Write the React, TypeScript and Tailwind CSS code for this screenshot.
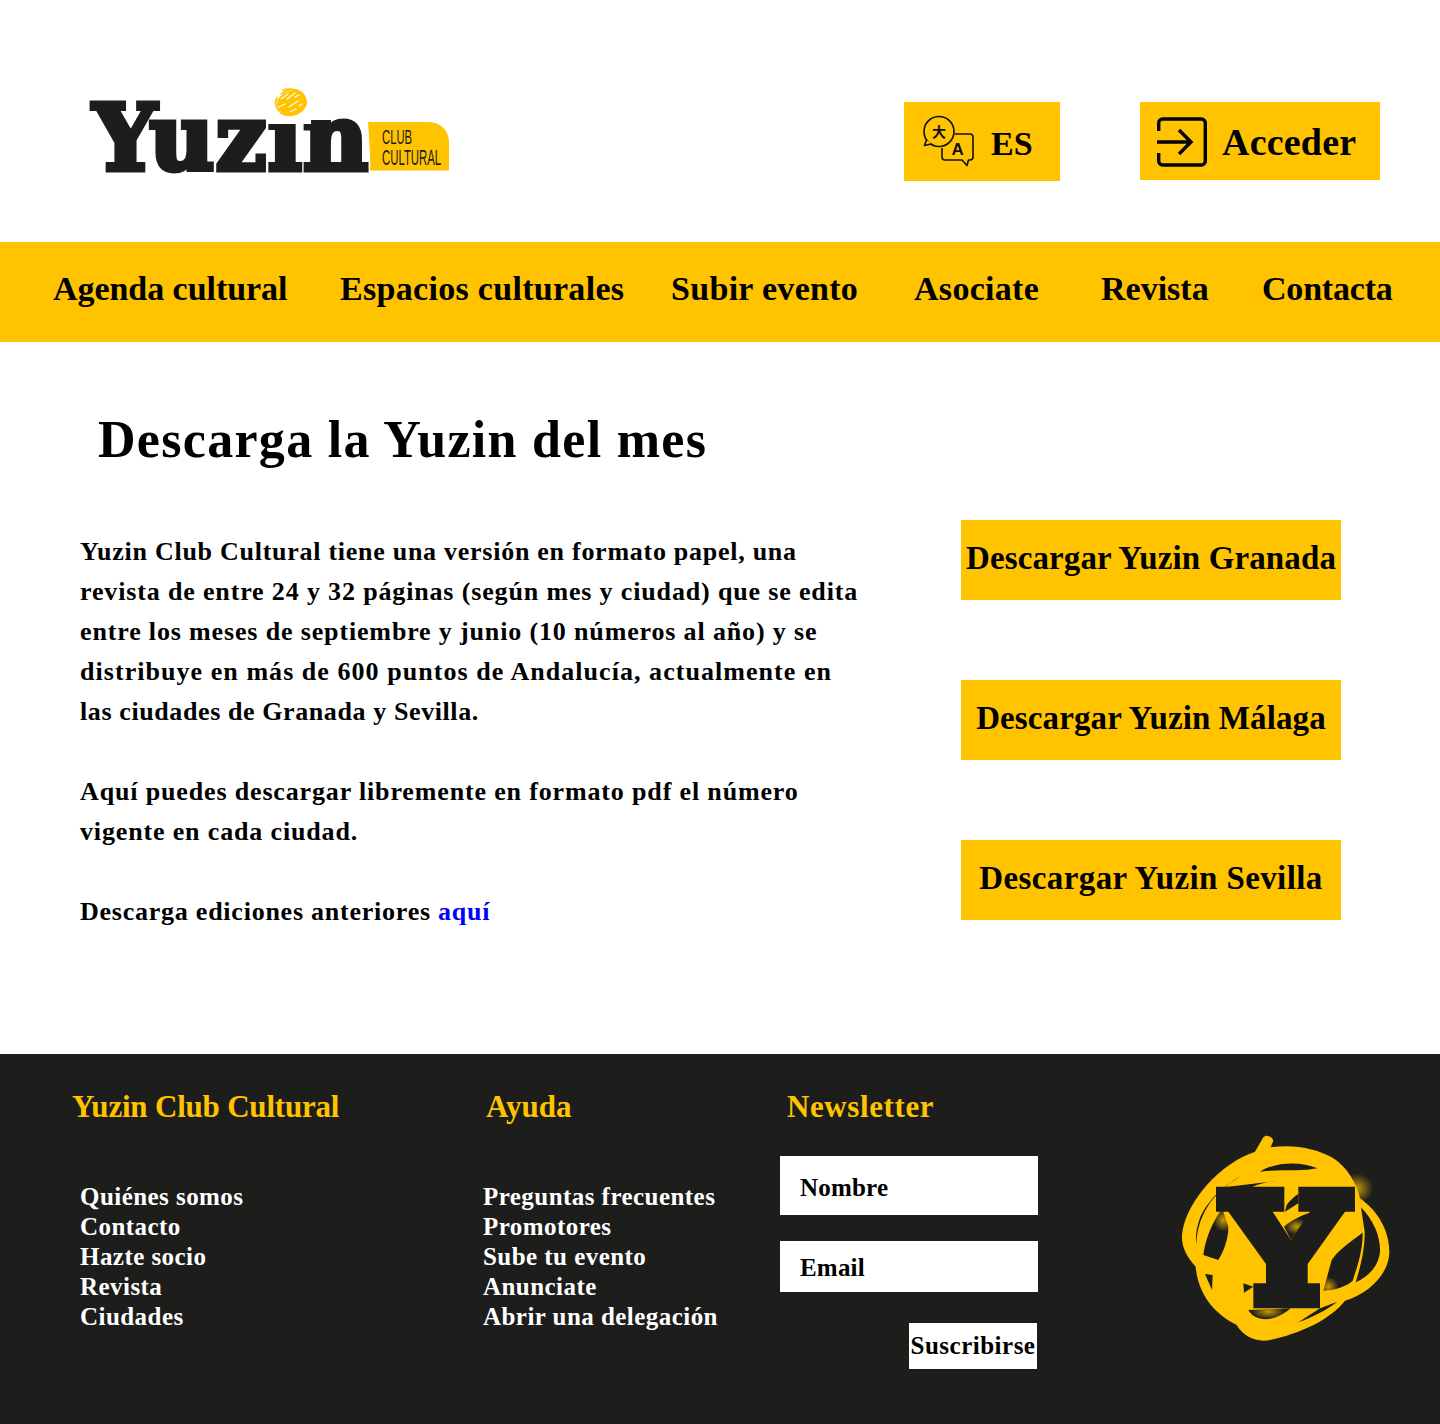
import React from "react";

const Logo = () => (
  <svg width="370" height="100" viewBox="0 0 370 100" className="block overflow-visible">
    <text transform="translate(2 84) scale(1.075 1)" fontFamily="'DejaVu Serif', serif" fontWeight="700" fontSize="92" fontStretch="condensed" letterSpacing="1.5" fill="#1d1d1b" stroke="#1d1d1b" strokeWidth="5">Yuzin</text>
    <rect x="176" y="0" width="44" height="38" fill="#fff" />
    <path d="M277 36h61a20 20 0 0 1 20 20v28.500h-79q1-6-2-48.500z" fill="#ffc300" />
    <text transform="translate(291 58) scale(.565 1)" fontFamily="'Liberation Sans', sans-serif" fontSize="20" fill="#1d1d1b">CLUB</text>
    <text transform="translate(291 79) scale(.517 1)" fontFamily="'Liberation Sans', sans-serif" fontSize="22" fill="#1d1d1b">CULTURAL</text>
    <ellipse cx="201" cy="17" rx="15" ry="12" fill="#ffc300" transform="rotate(-10 201 17)" />
    <g fill="none" stroke="#ffc300" strokeWidth="1.6" strokeLinecap="round">
      <path d="M190 8c6-5 15-6 20-2 6 5 6 13 0 19-5 5-14 6-20 2-5-4-7-10-4-15" />
      <path d="M192 4c7-2 14 0 19 4" />
    </g>
    <g fill="none" stroke="#fff" strokeWidth="1.1" strokeLinecap="round">
      <path d="M190 13l7-5M196 13l8-6M188 21l6-3M198 21l9-6M204 11l4-2M199 26l6-3M208 20l3-2" />
    </g>
  </svg>
);

const LangIcon = () => (
  <svg width="52" height="52" viewBox="0 0 52 52" fill="none" stroke="#111" strokeWidth="1.6" className="mt-px overflow-visible">
    <circle cx="16" cy="15.500" r="15" />
    <path d="M3.500 24L1.500 29.500L9 27.800" fill="#ffc300" strokeLinejoin="round" />
    <path d="M32 18h15a3 3 0 0 1 3 3v20a3 3 0 0 1-3 3h-1.500l-1.500 5.500-5-5.500H22a3 3 0 0 1-3-3v-9" strokeLinejoin="round" />
    <text x="9" y="21" fontSize="14" fill="#111" stroke="none" fontFamily="'Noto Sans CJK SC', sans-serif">大</text>
    <text x="28.500" y="38.500" fontSize="17" fill="#111" stroke="none" fontFamily="'Liberation Sans', sans-serif">A</text>
  </svg>
);

const LoginIcon = () => (
  <svg width="50" height="50" viewBox="0 0 50 50" fill="none" stroke="#000" strokeWidth="3.4" className="mt-px">
    <path d="M1.700 14V6a4 4 0 0 1 4-4h38.600a4 4 0 0 1 4 4v38a4 4 0 0 1-4 4H5.700a4 4 0 0 1-4-4v-8" />
    <path d="M0 25h34M22 13l12 12-12 12" />
  </svg>
);

const FooterLogo = () => (
  <svg width="250" height="240" viewBox="0 0 750 720" className="block">
    <defs>
      <radialGradient id="glow">
        <stop offset="0%" stopColor="#ffc300" stopOpacity="0.75" />
        <stop offset="100%" stopColor="#ffc300" stopOpacity="0" />
      </radialGradient>
    </defs>
    <ellipse cx="590" cy="205" rx="50" ry="45" fill="url(#glow)" />
    <path fill="#ffc300" d="M285 95L310 52C318 42 335 48 340 62L332 82C400 72 470 85 520 115C560 140 590 190 600 235C650 270 690 330 688 400C685 460 630 520 555 542C510 600 420 640 330 660C290 668 250 650 230 615C170 585 115 530 107 440C75 405 60 370 68 330C85 240 180 130 285 95Z" />
    <g fill="#1d1d1b">
      <path d="M300 155C340 128 420 122 472 145C430 155 350 148 300 155Z" />
      <path d="M245 168C190 195 135 250 118 300C110 325 105 350 110 375C108 320 135 260 170 225C190 200 225 180 245 168Z" />
      <path d="M352 183C290 185 220 220 180 275C150 320 135 365 130 405L175 420C190 395 205 360 205 320L190 275L205 200Z" />
      <path d="M603 262C640 300 662 350 660 395C655 440 625 470 587 487C600 445 615 390 614 335Z" />
      <path d="M608 338C570 365 530 395 515 420L490 512C530 510 560 498 578 482C595 430 608 390 608 338Z" />
      <path d="M265 570C285 605 340 610 392 565Z" />
      <path d="M415 607C460 590 500 570 532 545L480 565Z" />
      <path d="M135 462L158 465L156 510Z" />
      <path d="M250 490L280 500L252 518Z" />
      <path d="M372 320C395 300 425 285 450 278L393 360Z" />
      <path d="M380 255C390 240 405 228 415 222V250L375 275Z" />
    </g>
    <ellipse cx="190" cy="300" rx="30" ry="35" fill="url(#glow)" />
    <ellipse cx="505" cy="500" rx="30" ry="30" fill="url(#glow)" />
    <ellipse cx="325" cy="575" rx="50" ry="22" fill="url(#glow)" />
    <ellipse cx="410" cy="320" rx="35" ry="25" fill="url(#glow)" />
    <path fill="#1d1d1b" d="M168 200H373V275H338L393 360L450 275H415V200H585V275H555L443 432V490H480V565H280V490H318V432L205 275H168Z" />
  </svg>
);

const nav = [
  ["Agenda cultural", "w-[340px] pl-[53px] tracking-[-0.05px]"],
  ["Espacios culturales", "w-[331px]"],
  ["Subir evento", "w-[243px]"],
  ["Asociate", "w-[187px]"],
  ["Revista", "w-[161px] tracking-[0px]"],
  ["Contacta", "w-[178px] tracking-[-0.2px]"],
];

const DownloadBtn = ({ children, cls }: { children: React.ReactNode; cls: string }) => (
  <a className={`flex h-20 w-[380px] items-center justify-center bg-[#ffc300] pb-[3px] text-[33px] font-bold text-black ${cls}`}>{children}</a>
);

const FootList = ({ items }: { items: string[] }) => (
  <ul className="text-[25px] font-bold leading-[30px] tracking-[0.45px] text-white">
    {items.map((i) => <li key={i}>{i}</li>)}
  </ul>
);

const FootTitle = ({ children, cls }: { children: React.ReactNode; cls: string }) => (
  <h3 className={`text-[31px] font-bold leading-10 text-[#ffc300] ${cls}`}>{children}</h3>
);

export default function App() {
  return (
    <div className="flex h-[1424px] w-full flex-col bg-white font-['Liberation_Serif',serif]">
      <header className="flex h-[242px] shrink-0 items-start">
        <div className="ml-[91px] mt-[86px]"><Logo /></div>
        <a className="ml-[443px] mt-[102px] flex h-[79px] w-[156px] items-center gap-4 bg-[#ffc300] pl-[19px] text-[34px] font-bold text-black">
          <LangIcon /><span className="pt-[3px]">ES</span>
        </a>
        <a className="ml-20 mt-[102px] flex h-[78px] w-[240px] items-center gap-[15px] bg-[#ffc300] pl-[17px] text-[38px] font-bold tracking-[0.2px] text-black">
          <LoginIcon /><span className="pt-[3px]">Acceder</span>
        </a>
      </header>
      <nav className="flex h-[100px] shrink-0 items-center bg-[#ffc300] pb-[7px] text-[34px] font-bold tracking-[0.3px] text-black">
        {nav.map(([t, c]) => <a key={t} className={`whitespace-nowrap ${c}`}>{t}</a>)}
      </nav>
      <main className="h-[712px] shrink-0">
        <h1 className="ml-[98px] mt-[68px] text-[52px] font-bold leading-[60px] tracking-[1.3px] text-black">Descarga la Yuzin del mes</h1>
        <div className="mt-[50px] flex">
          <div className="ml-20 w-[800px] pt-3 text-[26px] font-bold leading-10 tracking-[0.85px] text-black">
            <p>
              <span className="tracking-[0.73px]">Yuzin Club Cultural tiene una versión en formato papel, una</span><br />
              revista de entre 24 y 32 páginas (según mes y ciudad) que se edita<br />
              entre los meses de septiembre y junio (10 números al año) y se<br />
              <span className="tracking-[1.05px]">distribuye en más de 600 puntos de Andalucía, actualmente en</span><br />
              <span className="tracking-[0.6px]">las ciudades de Granada y Sevilla.</span>
            </p>
            <p className="mt-10">Aquí puedes descargar libremente en formato pdf el número<br />vigente en cada ciudad.</p>
            <p className="mt-10 tracking-[0.76px]">Descarga ediciones anteriores <a className="text-[#0000ff]">aquí</a></p>
          </div>
          <div className="ml-[81px] flex flex-col gap-20">
            <DownloadBtn cls="tracking-[0.12px]">Descargar Yuzin Granada</DownloadBtn>
            <DownloadBtn cls="tracking-[0.12px]">Descargar Yuzin Málaga</DownloadBtn>
            <DownloadBtn cls="tracking-[0.4px]">Descargar Yuzin Sevilla</DownloadBtn>
          </div>
        </div>
      </main>
      <footer className="flex flex-1 bg-[#1d1d1b]">
        <div className="ml-[72px] w-[408px] pt-[33px]">
          <FootTitle cls="tracking-[-0.2px]">Yuzin Club Cultural</FootTitle>
          <div className="ml-2 mt-[55px]"><FootList items={["Quiénes somos", "Contacto", "Hazte socio", "Revista", "Ciudades"]} /></div>
        </div>
        <div className="w-[300px] pt-[33px]">
          <FootTitle cls="ml-[6px]">Ayuda</FootTitle>
          <div className="ml-[3px] mt-[55px]"><FootList items={["Preguntas frecuentes", "Promotores", "Sube tu evento", "Anunciate", "Abrir una delegación"]} /></div>
        </div>
        <div className="w-[258px] pt-[33px]">
          <FootTitle cls="ml-[7px] tracking-[0.6px]">Newsletter</FootTitle>
          <input placeholder="Nombre" className="mt-[29px] block h-[59px] w-[258px] bg-white pl-5 pt-[5px] text-[25px] font-bold tracking-[0.2px] placeholder:text-black" />
          <input placeholder="Email" className="mt-[26px] block h-[51px] w-[258px] bg-white pl-5 pt-[2px] text-[25px] font-bold tracking-[0.2px] placeholder:text-black" />
          <div className="mt-[31px] flex justify-end pr-px">
            <button className="h-[46px] w-[128px] bg-white text-[25px] font-bold tracking-[0.5px] text-black">Suscribirse</button>
          </div>
        </div>
        <div className="ml-[122px] mt-[66px]"><FooterLogo /></div>
      </footer>
    </div>
  );
}
